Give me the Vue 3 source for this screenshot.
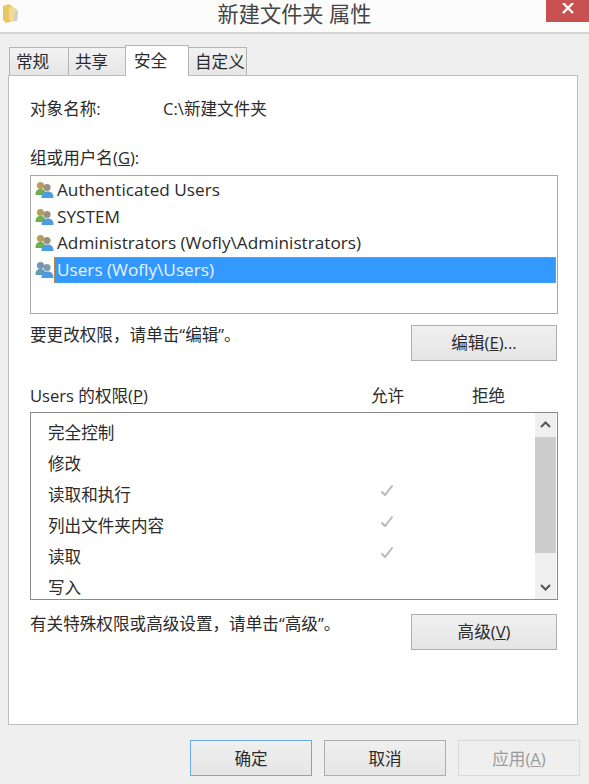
<template>
  <div class="dialog">
    <header class="titlebar">
      <svg class="folder" width="18" height="20" viewBox="0 0 18 20">
        <path d="M2 3 L8 1 L12 4 L12 18 L5 20 L2 17 Z" fill="#e9c766" />
        <path d="M8 4 L14 5 L17 8 L16 18 L10 19 L8 16 Z" fill="#f3dc95" />
        <path d="M14 7 L17 8 L16 18 L13 18 Z" fill="#d0d0c8" />
      </svg>
      <h1 class="title">新建文件夹 属性</h1>
      <button type="button" class="close">
        <svg width="12" height="11" viewBox="0 0 12 11">
          <path d="M1 0 L11 10 M11 0 L1 10" stroke="#fff" stroke-width="2.4" fill="none" />
        </svg>
      </button>
    </header>

    <main class="body">
      <nav class="tabs">
        <span
          v-for="t in tabs"
          :key="t.label"
          class="tab"
          :class="{ active: t.active }"
          :style="{ width: t.width + 'px' }"
        >{{ t.label }}</span>
      </nav>

      <section class="panel">
        <div class="object-row">
          <span class="object-label">对象名称:</span>
          <span class="object-path">C:\新建文件夹</span>
        </div>

        <div class="group-label">组或用户名(<u>G</u>):</div>
        <ul class="user-list">
          <li v-for="u in users" :key="u.name" class="user" :class="{ selected: u.selected }">
            <svg class="user-icon" width="19" height="18" viewBox="0 0 19 18">
              <circle cx="5.5" cy="4.5" r="3.6" :fill="u.selected ? '#6f97b5' : '#b5a05e'" />
              <path d="M0.5 14 C0.5 9.5 2.5 8 5.5 8 C8.5 8 10.5 9.5 10.5 14 Z" :fill="u.selected ? '#5f9bb5' : '#6fae4f'" />
              <circle cx="12" cy="6.5" r="3.6" :fill="u.selected ? '#7d99b0' : '#9c8f7c'" />
              <path d="M6.5 17 C6.5 12 9 10.5 12.5 10.5 C16 10.5 18.5 12 18.5 17 Z" fill="#4f9be0" />
            </svg>
            <span class="user-name">{{ u.name }}</span>
          </li>
        </ul>

        <div class="action-row first">
          <span>要更改权限，请单击“编辑”。</span>
          <button type="button" class="btn side">编辑(<u>E</u>)...</button>
        </div>

        <div class="perm-head">
          <span class="perm-title">Users 的权限(<u>P</u>)</span>
          <span class="perm-allow">允许</span>
          <span class="perm-deny">拒绝</span>
        </div>
        <div class="perm-box">
          <ul class="perm-list">
            <li v-for="p in perms" :key="p.name" class="perm">
              <span class="perm-name">{{ p.name }}</span>
              <svg v-if="p.allow" class="check" width="14" height="13" viewBox="0 0 14 13">
                <path d="M1.5 7.5 L5 11 L12.5 1.5" stroke="#b9b9b9" stroke-width="2" fill="none" />
              </svg>
            </li>
          </ul>
          <div class="scrollbar">
            <svg class="arrow" width="21" height="24" viewBox="0 0 21 24">
              <path d="M6 14 L10.5 9.5 L15 14" stroke="#555" stroke-width="2" fill="none" />
            </svg>
            <div class="thumb"></div>
            <div class="track"></div>
            <svg class="arrow" width="21" height="24" viewBox="0 0 21 24">
              <path d="M6 10 L10.5 14.5 L15 10" stroke="#555" stroke-width="2" fill="none" />
            </svg>
          </div>
        </div>

        <div class="action-row second">
          <span>有关特殊权限或高级设置，请单击“高级”。</span>
          <button type="button" class="btn side">高级(<u>V</u>)</button>
        </div>
      </section>

      <footer class="footer">
        <button type="button" class="btn foot primary">确定</button>
        <button type="button" class="btn foot">取消</button>
        <button type="button" class="btn foot disabled">应用(<u>A</u>)</button>
      </footer>
    </main>
  </div>
</template>

<script setup>
const tabs = [
  { label: '常规', width: 60 },
  { label: '共享', width: 58 },
  { label: '安全', width: 64, active: true },
  { label: '自定义', width: 59 },
];

const users = [
  { name: 'Authenticated Users' },
  { name: 'SYSTEM' },
  { name: 'Administrators (Wofly\\Administrators)' },
  { name: 'Users (Wofly\\Users)', selected: true },
];

const perms = [
  { name: '完全控制' },
  { name: '修改' },
  { name: '读取和执行', allow: true },
  { name: '列出文件夹内容', allow: true },
  { name: '读取', allow: true },
  { name: '写入' },
];
</script>

<style>
body {
  margin: 0;
  background: #efefef;
}
</style>

<style scoped>
.dialog {
  width: 589px;
  height: 784px;
  overflow: hidden;
  font-family: "Open Sans", "Noto Sans CJK SC", sans-serif;
  font-size: 16.6px;
  color: #2b2b2b;
  background: #efefef;
}
.titlebar {
  position: relative;
  height: 32px;
  display: flex;
  align-items: flex-start;
  justify-content: center;
  background: #fcfcfc;
  border-bottom: 2px solid #d4d4d4;
}
.folder {
  position: absolute;
  left: 1px;
  top: 3px;
}
.title {
  margin: 0;
  font-size: 21.2px;
  font-weight: 400;
  line-height: 27px;
  color: #444;
}
.close {
  position: absolute;
  right: 0;
  top: 0;
  width: 43px;
  height: 22px;
  padding: 0 0 6px;
  border: 0;
  background: #c75050;
  display: flex;
  align-items: center;
  justify-content: center;
}
.body {
  padding: 10px 11px 0 8px;
}
.tabs {
  display: flex;
  align-items: flex-end;
  height: 31px;
  padding-left: 1px;
  position: relative;
  z-index: 1;
}
.tab {
  box-sizing: border-box;
  height: 28px;
  line-height: 28px;
  padding-left: 6px;
  margin-right: -1px;
  border: 1px solid #b4b4b4;
  border-bottom: 0;
  background: linear-gradient(#f2f2f2, #e6e6e6);
  white-space: nowrap;
}
.tab.active {
  height: 31px;
  margin-bottom: -1px;
  line-height: 29px;
  padding-left: 8px;
  background: #fff;
}
.panel {
  box-sizing: border-box;
  height: 650px;
  padding: 0 19px 0 21px;
  background: #fff;
  border: 1px solid #bdbdbd;
}
.object-row {
  display: flex;
  margin-top: 22px;
  line-height: 22px;
}
.object-label {
  width: 133px;
}
.group-label {
  margin-top: 27px;
  line-height: 22px;
}
.user-list {
  box-sizing: border-box;
  height: 139px;
  margin: 6px 0 0;
  padding: 1px 1px 0 4px;
  list-style: none;
  border: 1px solid #a8a8a8;
}
.user {
  display: flex;
  align-items: center;
  height: 26.6px;
}
.user-icon {
  flex: none;
}
.user-name {
  flex: 1;
  padding-left: 3px;
  font-size: 17.2px;
  line-height: 26px;
  white-space: nowrap;
}
.user.selected .user-name {
  background: #3399ff;
  color: #e8f3ff;
  outline: 1px dotted #c9904a;
  outline-offset: -1px;
}
.action-row {
  display: flex;
  align-items: flex-start;
  justify-content: space-between;
  padding-right: 1px;
  line-height: 20px;
}
.action-row.first {
  margin-top: 11px;
}
.action-row.second {
  margin-top: 14px;
}
.btn {
  box-sizing: border-box;
  padding: 0;
  font: inherit;
  color: #2b2b2b;
  border: 1px solid #adadad;
  background: linear-gradient(#f0f0f0, #e5e5e5);
}
.side {
  width: 146px;
  height: 36px;
}
.perm-head {
  display: flex;
  align-items: center;
  height: 22px;
  margin-top: 24px;
  line-height: 22px;
}
.perm-title {
  width: 341px;
}
.perm-allow {
  width: 101px;
}
.perm-box {
  display: flex;
  box-sizing: border-box;
  height: 188px;
  margin-top: 5px;
  border: 1px solid #8a8a8a;
  overflow: hidden;
}
.perm-list {
  flex: 1;
  margin: 0;
  padding: 4px 0 0 17px;
  list-style: none;
}
.perm {
  display: flex;
  align-items: center;
  height: 31px;
  position: relative;
}
.perm-name {
  width: 332px;
  line-height: 31px;
}
.check {
  margin-top: -8px;
}
.scrollbar {
  width: 21px;
  margin-right: 1px;
  display: flex;
  flex-direction: column;
  background: #f0f0f0;
}
.arrow {
  flex: none;
}
.thumb {
  height: 116px;
  background: #cdcdcd;
}
.track {
  flex: 1;
}
.footer {
  display: flex;
  justify-content: flex-end;
  gap: 12px;
  margin-top: 15px;
  margin-right: -2px;
}
.foot {
  width: 122px;
  height: 36px;
}
.primary {
  border: 1px solid #66aaf2;
}
.disabled {
  color: #9c9c9c;
  border-color: #d9d9d9;
  background: #efefef;
}
</style>
